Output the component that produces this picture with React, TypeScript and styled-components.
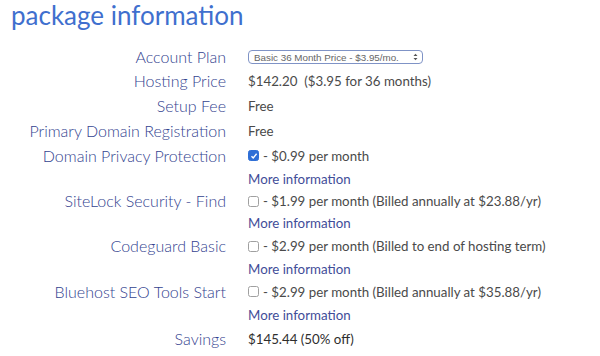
import React from "react";
import styled, { createGlobalStyle } from "styled-components";

const Global = createGlobalStyle`
  html, body { margin: 0; padding: 0; background: #ffffff; }
  body { font-family: Lato, "Open Sans", sans-serif; -webkit-font-smoothing: antialiased; }
`;

const Page = styled.div`
  width: 600px;
  height: 356px;
  overflow: hidden;
  background: #fff;
`;

const Title = styled.h1`
  margin: 0;
  padding: 0 0 0 11px;
  font-family: Lato, sans-serif;
  font-weight: 400;
  font-size: 26px;
  line-height: 30px;
  color: #3f6fce;
`;

const Grid = styled.div`
  display: grid;
  grid-template-columns: 226px 1fr;
  column-gap: 22px;
  margin-top: 15px;
`;

const Label = styled.div<{ $h: number }>`
  text-align: right;
  font-size: 16px;
  font-weight: 300;
  height: ${(p) => p.$h}px;
  line-height: ${(p) => p.$h}px;
  color: #33438f;
  white-space: nowrap;
`;

const Value = styled.div`
  display: flex;
  flex-direction: column;
  font-size: 13.3px;
  color: #4a4a4a;
`;

const Line = styled.div<{ $h: number }>`
  height: ${(p) => p.$h}px;
  display: flex;
  align-items: center;
  white-space: nowrap;
`;

const Link = styled.a`
  color: #3f4d99;
  text-decoration: none;
`;

const Select = styled.div`
  width: 175px;
  height: 14px;
  border: 1px solid #7f93c6;
  border-radius: 4px;
  display: flex;
  align-items: center;
  justify-content: space-between;
  padding: 0 4px 0 5px;
  font-size: 9.8px;
  color: #666;
  font-family: "Liberation Sans", Arial, sans-serif;
  box-sizing: border-box;
`;

const Arrows = styled.svg`
  flex: none;
`;

const Box = styled.span<{ $checked?: boolean }>`
  display: inline-flex;
  align-items: center;
  justify-content: center;
  width: 11px;
  height: 11px;
  border-radius: 2.5px;
  margin-right: 4px;
  box-sizing: border-box;
  border: 1px solid ${(p) => (p.$checked ? "#2f6fd6" : "#a0a0a0")};
  background: ${(p) => (p.$checked ? "#2f6fd6" : "#fff")};
`;

const Dark = styled.span`
  color: #2e2e2e;
`;

type Row = {
  label: string;
  lines: { h: number; node: React.ReactNode }[];
};

const Check = ({ checked }: { checked?: boolean }) => (
  <Box $checked={checked}>
    {checked && (
      <svg width="8" height="8" viewBox="0 0 8 8">
        <path d="M1.5 4.2 L3.2 6 L6.6 1.8" stroke="#fff" strokeWidth="1.4" fill="none" />
      </svg>
    )}
  </Box>
);

const more = <Link href="#">More information</Link>;

const rows: Row[] = [
  {
    label: "Account Plan",
    lines: [
      {
        h: 24,
        node: (
          <Select>
            <span>Basic 36 Month Price - $3.95/mo.</span>
            <Arrows width="5" height="8" viewBox="0 0 5 8">
              <path d="M0.5 3 L2.5 0.8 L4.5 3 Z M0.5 5 L2.5 7.2 L4.5 5 Z" fill="#555" />
            </Arrows>
          </Select>
        ),
      },
    ],
  },
  { label: "Hosting Price", lines: [{ h: 24, node: <span>$142.20&nbsp;&nbsp;($3.95 for 36 months)</span> }] },
  { label: "Setup Fee", lines: [{ h: 25, node: <span>Free</span> }] },
  { label: "Primary Domain Registration", lines: [{ h: 25, node: <span>Free</span> }] },
  {
    label: "Domain Privacy Protection",
    lines: [
      {
        h: 25,
        node: (
          <>
            <Check checked />
            <span>- $0.99 per month</span>
          </>
        ),
      },
      { h: 22, node: more },
    ],
  },
  {
    label: "SiteLock Security - Find",
    lines: [
      {
        h: 22,
        node: (
          <>
            <Check />
            <span>- $1.99 per month (Billed annually at $23.88/yr)</span>
          </>
        ),
      },
      { h: 22, node: more },
    ],
  },
  {
    label: "Codeguard Basic",
    lines: [
      {
        h: 24,
        node: (
          <>
            <Check />
            <span>- $2.99 per month (Billed to end of hosting term)</span>
          </>
        ),
      },
      { h: 22, node: more },
    ],
  },
  {
    label: "Bluehost SEO Tools Start",
    lines: [
      {
        h: 23,
        node: (
          <>
            <Check />
            <span>- $2.99 per month (Billed annually at $35.88/yr)</span>
          </>
        ),
      },
      { h: 24, node: more },
    ],
  },
  { label: "Savings", lines: [{ h: 24, node: <Dark>$145.44 (50% off)</Dark> }] },
  { label: "Total", lines: [{ h: 24, node: <Dark>$142.20</Dark> }] },
];

export default function App() {
  return (
    <Page>
      <Global />
      <Title>package information</Title>
      <Grid>
        {rows.map((r) => (
          <React.Fragment key={r.label}>
            <Label $h={r.lines[0].h}>{r.label}</Label>
            <Value>
              {r.lines.map((l, i) => (
                <Line key={i} $h={l.h}>
                  {l.node}
                </Line>
              ))}
            </Value>
          </React.Fragment>
        ))}
      </Grid>
    </Page>
  );
}
